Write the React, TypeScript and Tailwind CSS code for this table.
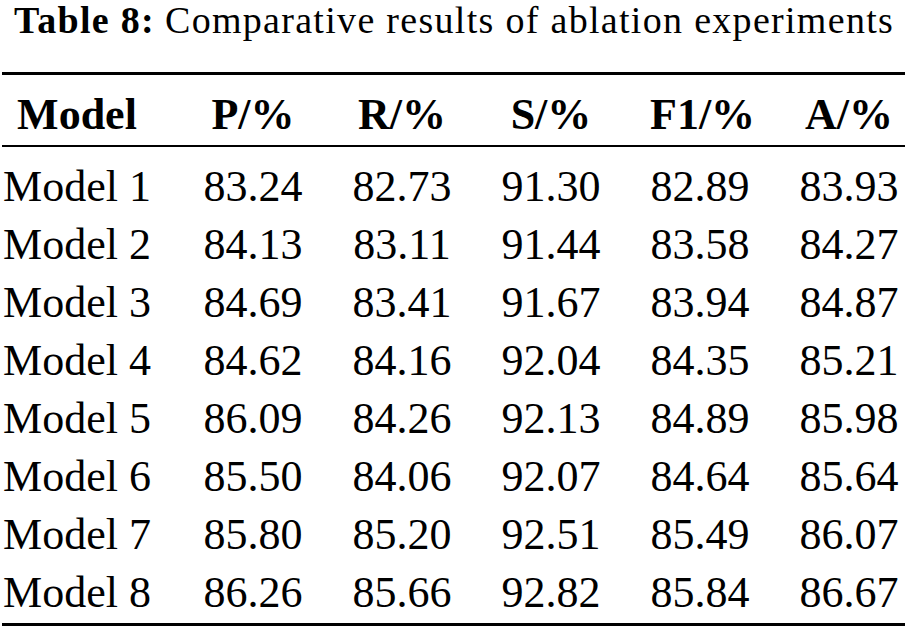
const headers = ['Model', 'P/%', 'R/%', 'S/%', 'F1/%', 'A/%'];

const rows = [
  ['Model 1', '83.24', '82.73', '91.30', '82.89', '83.93'],
  ['Model 2', '84.13', '83.11', '91.44', '83.58', '84.27'],
  ['Model 3', '84.69', '83.41', '91.67', '83.94', '84.87'],
  ['Model 4', '84.62', '84.16', '92.04', '84.35', '85.21'],
  ['Model 5', '86.09', '84.26', '92.13', '84.89', '85.98'],
  ['Model 6', '85.50', '84.06', '92.07', '84.64', '85.64'],
  ['Model 7', '85.80', '85.20', '92.51', '85.49', '86.07'],
  ['Model 8', '86.26', '85.66', '92.82', '85.84', '86.67'],
];

export default function App() {
  return (
    <div className="w-[907px] h-[631px] bg-white text-black overflow-hidden font-[family-name:'Liberation_Serif',serif]">
      {/* Caption */}
      <div className="text-[38px] leading-[40px] tracking-[1.3px] pl-[14px] whitespace-nowrap">
        <span className="font-bold">Table 8:</span>
        <span className="ml-[10px]">Comparative results of ablation experiments</span>
      </div>

      {/* Top rule */}
      <div className="mt-[32px] mx-[2px] h-[3px] bg-black" />

      {/* Header */}
      <div className="grid grid-cols-[154px_repeat(5,100px)] gap-x-[49px] pt-[11px] text-[44px] leading-[58px] font-bold">
        {headers.map((h) => (
          <div key={h} className="text-center whitespace-nowrap">
            {h}
          </div>
        ))}
      </div>

      {/* Mid rule */}
      <div className="mt-[1px] mx-[2px] h-[2px] bg-black" />

      {/* Body */}
      <div className="pt-[11px] text-[44px] leading-[58px]">
        {rows.map((r) => (
          <div key={r[0]} className="grid grid-cols-[154px_repeat(5,100px)] gap-x-[49px]">
            {r.map((c, i) => (
              <div key={i} className="text-center whitespace-nowrap">
                {c}
              </div>
            ))}
          </div>
        ))}
      </div>

      {/* Bottom rule */}
      <div className="mt-[1px] mx-[2px] h-[3px] bg-black" />
    </div>
  );
}
